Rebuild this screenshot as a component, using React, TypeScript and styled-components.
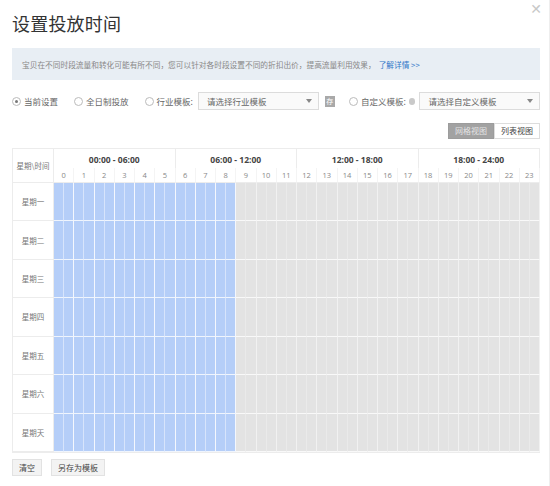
import React, { useState } from 'react';
import styled, { createGlobalStyle } from 'styled-components';

const GlobalStyle = createGlobalStyle`
  html, body {
    margin: 0;
    padding: 0;
    background: #fff;
  }
  body {
    font-family: "Noto Sans CJK SC", "Noto Sans", sans-serif;
    color: #555;
  }
`;

const DAYS = ['星期一', '星期二', '星期三', '星期四', '星期五', '星期六', '星期天'];
const RANGES = ['00:00 - 06:00', '06:00 - 12:00', '12:00 - 18:00', '18:00 - 24:00'];
const HOURS = Array.from({ length: 24 }, (_, i) => i);
const SLOTS = Array.from({ length: 48 }, (_, i) => i);

const Dialog = styled.div`
  width: 550px;
  height: 486px;
  box-sizing: border-box;
  padding: 0 9px 0 12px;
  display: flex;
  flex-direction: column;
  border-right: 1px solid #eee;
`;

const Header = styled.div`
  display: flex;
  justify-content: space-between;
  align-items: flex-start;
  height: 48px;
`;

const Title = styled.h2`
  margin: 10px 0 0 0;
  font-size: 18px;
  font-weight: 400;
  color: #333;
  letter-spacing: 0.2px;
`;

const Close = styled.span`
  margin: 0 -2px 0 0;
  font-family: "DejaVu Sans", sans-serif;
  font-size: 14px;
  line-height: 18px;
  color: #c8c8c8;
  cursor: pointer;
`;

const Notice = styled.div`
  height: 32px;
  background: #e8eef4;
  display: flex;
  align-items: center;
  padding: 0 10px;
  font-size: 7.7px;
  color: #888;
  white-space: nowrap;
`;

const NoticeLink = styled.a`
  color: #2f76c8;
  text-decoration: none;
  margin-left: 3px;
`;

const Options = styled.div`
  display: flex;
  align-items: center;
  height: 20px;
  margin-top: 11px;
`;

const RadioLabel = styled.label<{ gap?: number }>`
  display: flex;
  align-items: center;
  font-size: 8.5px;
  color: #666;
  margin-right: ${(p) => p.gap ?? 0}px;
  cursor: pointer;
  white-space: nowrap;
`;

const RadioDot = styled.span<{ checked?: boolean }>`
  width: 7px;
  height: 7px;
  border-radius: 50%;
  border: 1px solid #bbb;
  background: #fff;
  margin-right: 3px;
  display: flex;
  align-items: center;
  justify-content: center;
  &::after {
    content: '';
    width: 3px;
    height: 3px;
    border-radius: 50%;
    background: ${(p) => (p.checked ? '#777' : 'transparent')};
  }
`;

const Select = styled.div<{ w: number }>`
  width: ${(p) => p.w}px;
  height: 18px;
  box-sizing: border-box;
  border: 1px solid #dcdcdc;
  background: #fafafa;
  display: flex;
  align-items: center;
  justify-content: space-between;
  padding: 0 6px 0 8px;
  font-size: 8.5px;
  color: #666;
`;

const Caret = styled.span`
  width: 0;
  height: 0;
  border-left: 3.5px solid transparent;
  border-right: 3.5px solid transparent;
  border-top: 4px solid #888;
`;

const SaveIcon = styled.span`
  width: 11px;
  height: 11px;
  background: #a9a9a9;
  color: #fff;
  font-size: 7px;
  line-height: 11px;
  text-align: center;
  margin: 0 14px 0 6px;
`;

const Help = styled.span`
  width: 7px;
  height: 7px;
  border-radius: 50%;
  background: #c9c9c9;
  margin: 0 4px 0 3px;
`;

const ViewBar = styled.div`
  display: flex;
  justify-content: flex-end;
  margin-top: 12px;
  height: 16px;
`;

const ViewButton = styled.button<{ active?: boolean }>`
  height: 16px;
  padding: 0 6px;
  font-family: inherit;
  font-size: 8px;
  border: 1px solid ${(p) => (p.active ? '#9c9c9c' : '#ddd')};
  background: ${(p) => (p.active ? '#a2a2a2' : '#fff')};
  color: ${(p) => (p.active ? '#e4e4e4' : '#444')};
  cursor: pointer;
  line-height: 1;
`;

const Schedule = styled.div`
  margin-top: 9px;
  height: 303px;
  display: grid;
  grid-template-columns: 41px repeat(48, 1fr);
  grid-template-rows: 19px 15px repeat(7, 1fr);
  border: 1px solid #ececec;
  border-right: none;
`;

const Corner = styled.div`
  grid-row: 1 / span 2;
  grid-column: 1;
  display: flex;
  align-items: center;
  justify-content: center;
  font-size: 7.5px;
  color: #777;
  border-right: 1px solid #ececec;
  border-bottom: 1px solid #ececec;
`;

const RangeCell = styled.div<{ col: number }>`
  grid-row: 1;
  grid-column: ${(p) => p.col} / span 12;
  display: flex;
  align-items: center;
  justify-content: center;
  font-family: "Open Sans", "DejaVu Sans", sans-serif;
  font-weight: 700;
  font-size: 8.5px;
  color: #444;
  border-right: 1px solid #ececec;
  padding-top: 2px;
`;

const HourCell = styled.div<{ col: number }>`
  grid-row: 2;
  grid-column: ${(p) => p.col} / span 2;
  display: flex;
  align-items: center;
  justify-content: center;
  font-family: "Open Sans", "DejaVu Sans", sans-serif;
  font-size: 7.5px;
  color: #888;
  border-right: 1px solid #f4f4f4;
  border-bottom: 1px solid #ececec;
`;

const DayCell = styled.div<{ row: number }>`
  grid-column: 1;
  grid-row: ${(p) => p.row};
  display: flex;
  align-items: center;
  justify-content: center;
  font-size: 7.5px;
  color: #777;
  border-right: 1px solid #ececec;
  border-bottom: 1px solid #ececec;
`;

const Slot = styled.div<{ on: boolean; hourEnd: boolean }>`
  background: ${(p) => (p.on ? '#b5cef8' : '#e3e3e3')};
  border-right: 1px solid
    ${(p) =>
      p.on
        ? p.hourEnd
          ? 'rgba(255,255,255,0.85)'
          : 'rgba(255,255,255,0.45)'
        : p.hourEnd
          ? 'rgba(255,255,255,0.5)'
          : 'rgba(255,255,255,0.25)'};
  border-bottom: 1px solid rgba(255, 255, 255, 0.8);
  cursor: pointer;
`;

const Footer = styled.div`
  display: flex;
  gap: 9px;
  margin-top: 6px;
`;

const FooterButton = styled.button`
  height: 17px;
  padding: 0 6px;
  font-family: inherit;
  font-size: 8px;
  color: #444;
  border: 1px solid #e2e2e2;
  background: #f3f3f3;
  line-height: 1;
  cursor: pointer;
`;

export default function App() {
  const [mode, setMode] = useState('current');
  const [view, setView] = useState('grid');
  const [selected, setSelected] = useState(() =>
    DAYS.map(() => SLOTS.map((s) => s < 18))
  );

  const toggle = (d: number, s: number) =>
    setSelected((prev) =>
      prev.map((row, i) => (i === d ? row.map((v, j) => (j === s ? !v : v)) : row))
    );

  return (
    <>
      <GlobalStyle />
      <Dialog>
        <Header>
          <Title>设置投放时间</Title>
          <Close>✕</Close>
        </Header>
        <Notice>
          宝贝在不同时段流量和转化可能有所不同，您可以针对各时段设置不同的折扣出价，提高流量利用效果，
          <NoticeLink href="#">了解详情 &gt;&gt;</NoticeLink>
        </Notice>
        <Options>
          <RadioLabel gap={16} onClick={() => setMode('current')}>
            <RadioDot checked={mode === 'current'} />
            当前设置
          </RadioLabel>
          <RadioLabel gap={16} onClick={() => setMode('full')}>
            <RadioDot checked={mode === 'full'} />
            全日制投放
          </RadioLabel>
          <RadioLabel gap={5} onClick={() => setMode('industry')}>
            <RadioDot checked={mode === 'industry'} />
            行业模板:
          </RadioLabel>
          <Select w={127}>
            请选择行业模板
            <Caret />
          </Select>
          <SaveIcon>存</SaveIcon>
          <RadioLabel onClick={() => setMode('custom')}>
            <RadioDot checked={mode === 'custom'} />
            自定义模板:
          </RadioLabel>
          <Help />
          <Select w={127}>
            请选择自定义模板
            <Caret />
          </Select>
        </Options>
        <ViewBar>
          <ViewButton active={view === 'grid'} onClick={() => setView('grid')}>
            网格视图
          </ViewButton>
          <ViewButton active={view === 'list'} onClick={() => setView('list')}>
            列表视图
          </ViewButton>
        </ViewBar>
        <Schedule>
          <Corner>星期\时间</Corner>
          {RANGES.map((r, i) => (
            <RangeCell key={r} col={2 + i * 12}>
              {r}
            </RangeCell>
          ))}
          {HOURS.map((h) => (
            <HourCell key={h} col={2 + h * 2}>
              {h}
            </HourCell>
          ))}
          {DAYS.map((day, d) => (
            <React.Fragment key={day}>
              <DayCell row={3 + d}>{day}</DayCell>
              {SLOTS.map((s) => (
                <Slot
                  key={s}
                  on={selected[d][s]}
                  hourEnd={s % 2 === 1}
                  onClick={() => toggle(d, s)}
                />
              ))}
            </React.Fragment>
          ))}
        </Schedule>
        <Footer>
          <FooterButton>清空</FooterButton>
          <FooterButton>另存为模板</FooterButton>
        </Footer>
      </Dialog>
    </>
  );
}
